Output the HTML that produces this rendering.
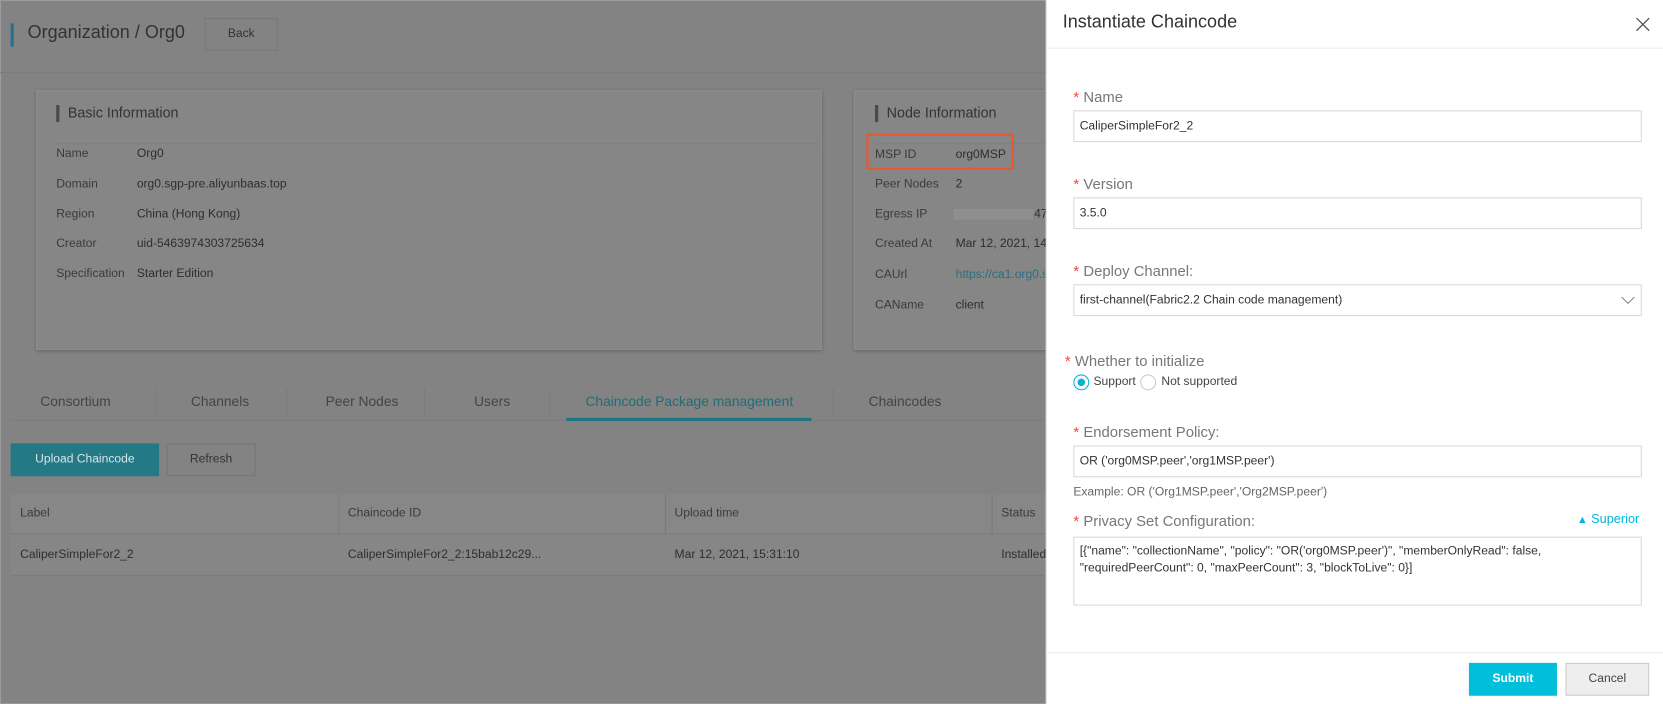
<!DOCTYPE html>
<html><head><meta charset="utf-8"><style>
*{margin:0;padding:0;box-sizing:border-box}
html,body{width:1663px;height:704px;overflow:hidden}
body{position:relative;background:#838383;font-family:"Liberation Sans",Arial,sans-serif;color:#2e2e2e;font-size:11.4px}
#w{position:absolute;left:0;top:0;width:1568px;height:664px;transform:scale(1.0606);transform-origin:0 0}
.a{position:absolute;white-space:nowrap}
.card{position:absolute;background:#868686;box-shadow:0 1px 3px rgba(0,0,0,.25);border:1px solid #8d8d8d}
.lab{color:#3b3b3b}
.drawer{position:absolute;left:986px;top:0;width:582px;height:664px;background:#fff;border-left:1px solid #ddd}
.inp{position:absolute;left:25px;width:536px;height:30px;border:1px solid #d9d9d9;font-size:11.4px;color:#333;padding:8px 5px}
.fl{position:absolute;font-size:14px;color:#777}
.fl b{color:#f5453d;font-weight:normal;margin-right:4px}
</style></head><body>
<div id="w">
<div class="a" style="left:0;top:0;width:1568px;height:664px;border:1px solid #9c9c9c"></div>
<div class="a" style="left:10px;top:22px;width:3px;height:22px;background:#2a6f8f"></div>
<div class="a" style="left:26px;top:21px;font-size:17px;color:#333">Organization / Org0</div>
<div class="a" style="left:193px;top:17px;width:69px;height:31px;border:1px solid #777;background:#838383;text-align:center;line-height:29px;color:#333">Back</div>
<div class="a" style="left:0;top:68px;width:986px;height:1px;background:#7c7c7c"></div>

<div class="card" style="left:34px;top:85px;width:741px;height:245px"></div>
<div class="a" style="left:53px;top:99px;width:3px;height:16px;background:#4a4a4a"></div>
<div class="a" style="left:64px;top:99px;font-size:13.5px;color:#333">Basic Information</div>
<div class="a" style="left:53px;top:135px;width:720px;height:1px;background:#7f7f7f"></div>
<div class="a lab" style="left:53px;top:139px">Name</div><div class="a" style="left:129px;top:139px">Org0</div>
<div class="a lab" style="left:53px;top:168px">Domain</div><div class="a" style="left:129px;top:168px">org0.sgp-pre.aliyunbaas.top</div>
<div class="a lab" style="left:53px;top:196px">Region</div><div class="a" style="left:129px;top:196px">China (Hong Kong)</div>
<div class="a lab" style="left:53px;top:224px">Creator</div><div class="a" style="left:129px;top:224px">uid-5463974303725634</div>
<div class="a lab" style="left:53px;top:252px">Specification</div><div class="a" style="left:129px;top:252px">Starter Edition</div>

<div class="card" style="left:805px;top:85px;width:200px;height:245px"></div>
<div class="a" style="left:825px;top:99px;width:3px;height:16px;background:#4a4a4a"></div>
<div class="a" style="left:836px;top:99px;font-size:13.5px;color:#333">Node Information</div>
<div class="a" style="left:825px;top:135px;width:161px;height:1px;background:#7f7f7f"></div>
<div class="a" style="left:817px;top:126px;width:139px;height:34px;border:2px solid #e8572f"></div>
<div class="a lab" style="left:825px;top:140px">MSP ID</div><div class="a" style="left:901px;top:140px">org0MSP</div>
<div class="a lab" style="left:825px;top:168px">Peer Nodes</div><div class="a" style="left:901px;top:168px">2</div>
<div class="a lab" style="left:825px;top:196px">Egress IP</div><div class="a" style="left:899px;top:197px;width:75px;height:10px;background:#8f8f8f"></div><div class="a" style="left:975px;top:196px">47</div>
<div class="a lab" style="left:825px;top:224px">Created At</div><div class="a" style="left:901px;top:224px">Mar 12, 2021, 14</div>
<div class="a lab" style="left:825px;top:253px">CAUrl</div><div class="a" style="left:901px;top:253px;color:#2a6f80">https://ca1.org0.s</div>
<div class="a lab" style="left:825px;top:282px">CAName</div><div class="a" style="left:901px;top:282px">client</div>

<div class="a" style="left:10px;top:396px;width:976px;height:1px;background:#7c7c7c"></div>
<div class="a" style="left:38px;top:371px;font-size:13px;color:#444">Consortium</div>
<div class="a" style="left:147px;top:366px;width:1px;height:26px;background:#7c7c7c"></div>
<div class="a" style="left:180px;top:371px;font-size:13px;color:#444">Channels</div>
<div class="a" style="left:270px;top:366px;width:1px;height:26px;background:#7c7c7c"></div>
<div class="a" style="left:307px;top:371px;font-size:13px;color:#444">Peer Nodes</div>
<div class="a" style="left:400px;top:366px;width:1px;height:26px;background:#7c7c7c"></div>
<div class="a" style="left:447px;top:371px;font-size:13px;color:#444">Users</div>
<div class="a" style="left:518px;top:366px;width:1px;height:26px;background:#7c7c7c"></div>
<div class="a" style="left:552px;top:371px;font-size:13px;color:#1e6d78">Chaincode Package management</div>
<div class="a" style="left:534px;top:394px;width:231px;height:3px;background:#1f7480"></div>
<div class="a" style="left:785px;top:366px;width:1px;height:26px;background:#7c7c7c"></div>
<div class="a" style="left:819px;top:371px;font-size:13px;color:#444">Chaincodes</div>

<div class="a" style="left:10px;top:418px;width:140px;height:31px;background:#237a86;color:#d8e5e7;text-align:center;line-height:31px">Upload Chaincode</div>
<div class="a" style="left:157px;top:418px;width:84px;height:31px;border:1px solid #777;text-align:center;line-height:29px;color:#333">Refresh</div>

<div class="a" style="left:10px;top:466px;width:976px;height:38px;background:#878787;border-bottom:1px solid #7c7c7c"></div>
<div class="a" style="left:10px;top:504px;width:976px;height:39px;background:#868686;border-bottom:1px solid #7c7c7c"></div>
<div class="a" style="left:319px;top:466px;width:1px;height:38px;background:#7a7a7a"></div>
<div class="a" style="left:627px;top:466px;width:1px;height:38px;background:#7a7a7a"></div>
<div class="a" style="left:935px;top:466px;width:1px;height:38px;background:#7a7a7a"></div>
<div class="a lab" style="left:19px;top:478px">Label</div>
<div class="a lab" style="left:328px;top:478px">Chaincode ID</div>
<div class="a lab" style="left:636px;top:478px">Upload time</div>
<div class="a lab" style="left:944px;top:478px">Status</div>
<div class="a" style="left:19px;top:517px">CaliperSimpleFor2_2</div>
<div class="a" style="left:328px;top:517px">CaliperSimpleFor2_2:15bab12c29...</div>
<div class="a" style="left:636px;top:517px">Mar 12, 2021, 15:31:10</div>
<div class="a" style="left:944px;top:517px">Installed</div>

<div class="drawer">
<div class="a" style="left:15px;top:11px;font-size:17px;color:#333">Instantiate Chaincode</div>
<svg class="a" style="left:555px;top:16px" width="14" height="14"><path d="M1 1L13 13M13 1L1 13" stroke="#555" stroke-width="1.2"/></svg>
<div class="a" style="left:0;top:45px;width:582px;height:1px;background:#eee"></div>

<div class="fl" style="left:25px;top:83px"><b>*</b>Name</div>
<div class="inp" style="top:104px">CaliperSimpleFor2_2</div>
<div class="fl" style="left:25px;top:165px"><b>*</b>Version</div>
<div class="inp" style="top:186px">3.5.0</div>
<div class="fl" style="left:25px;top:247px"><b>*</b>Deploy Channel:</div>
<div class="inp" style="top:268px">first-channel(Fabric2.2 Chain code management)</div>
<svg class="a" style="left:541px;top:279px" width="14" height="9"><path d="M1 1L7 7L13 1" stroke="#888" fill="none"/></svg>

<div class="fl" style="left:17px;top:332px"><b>*</b>Whether to initialize</div>
<div class="a" style="left:25px;top:353px;width:15px;height:15px;border:1px solid #00b5d6;border-radius:50%"></div>
<div class="a" style="left:29px;top:357px;width:7px;height:7px;background:#00b5d6;border-radius:50%"></div>
<div class="a" style="left:44px;top:354px;color:#444">Support</div>
<div class="a" style="left:88px;top:353px;width:15px;height:15px;border:1px solid #ccc;border-radius:50%"></div>
<div class="a" style="left:108px;top:354px;color:#444">Not supported</div>

<div class="fl" style="left:25px;top:399px"><b>*</b>Endorsement Policy:</div>
<div class="inp" style="top:420px">OR ('org0MSP.peer','org1MSP.peer')</div>
<div class="a" style="left:25px;top:458px;color:#666">Example: OR ('Org1MSP.peer','Org2MSP.peer')</div>
<div class="fl" style="left:25px;top:483px"><b>*</b>Privacy Set Configuration:</div>
<div class="a" style="left:500px;top:482px;color:#00b5d6;font-size:12px"><span style="font-size:10px">▲</span> Superior</div>
<div class="inp" style="top:506px;height:65px;white-space:normal;line-height:16px;padding:5px 5px">[{"name": "collectionName", "policy": "OR('org0MSP.peer')", "memberOnlyRead": false, "requiredPeerCount": 0, "maxPeerCount": 3, "blockToLive": 0}]</div>

<div class="a" style="left:0;top:615px;width:582px;height:1px;background:#eee"></div>
<div class="a" style="left:398px;top:625px;width:83px;height:31px;background:#00bfdb;color:#fff;text-align:center;line-height:31px;font-weight:bold">Submit</div>
<div class="a" style="left:489px;top:625px;width:79px;height:31px;background:#eee;border:1px solid #ccc;color:#444;text-align:center;line-height:29px">Cancel</div>
</div>
</div>
</body></html>
